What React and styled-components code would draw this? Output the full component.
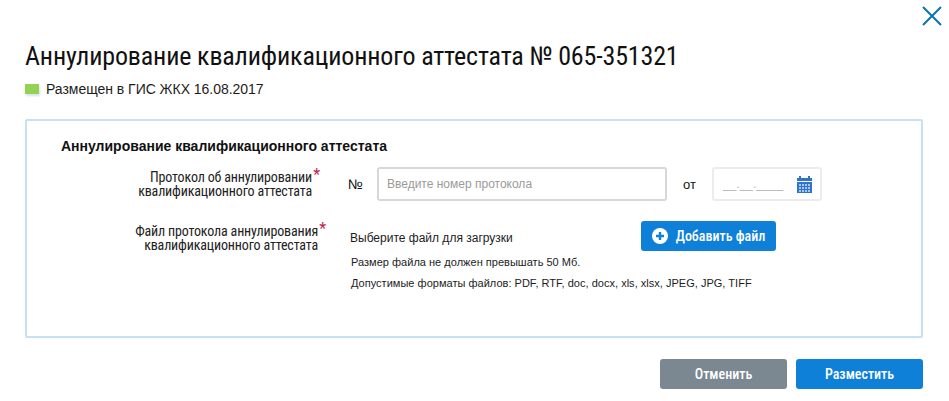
import React from "react";
import styled, { createGlobalStyle } from "styled-components";

const Global = createGlobalStyle`
  html, body { margin: 0; padding: 0; background: #fff; }
  body { font-family: "Liberation Sans", Arial, sans-serif; color: #111; }
`;

const Page = styled.div`
  width: 949px;
  height: 401px;
  box-sizing: border-box;
  padding: 6px 26px 0 25px;
  overflow: hidden;
`;
const CloseRow = styled.div`
  display: flex;
  justify-content: flex-end;
  margin-right: -19px;
  height: 20px;
`;
const Title = styled.h1`
  margin: 16px 0 0;
  font: 400 26px/28px Roboto, sans-serif;
  font-stretch: 75%;
  letter-spacing: -0.16px;
  color: #111;
  white-space: nowrap;
`;
const Status = styled.div`
  display: flex;
  align-items: center;
  gap: 7px;
  margin-top: 11px;
  height: 16px;
  font-size: 14px;
  letter-spacing: -0.03px;
  color: #1c1c1c;
`;
const StatusMark = styled.span`
  width: 14px;
  height: 10px;
  background: #94d352;
  box-shadow: 1px 2px 2px #d5e2ee;
`;
const Panel = styled.section`
  box-sizing: border-box;
  margin-top: 22px;
  width: 898px;
  height: 219px;
  border: 2px solid #c6e0f5;
  border-radius: 2px;
  padding: 17px 0 0 34px;
`;
const PanelTitle = styled.h2`
  margin: 0;
  font: 700 14px/16px "Liberation Sans", sans-serif;
  color: #111;
`;
const Row = styled.div`
  display: flex;
  align-items: flex-start;
`;
const ProtocolRow = styled(Row)`
  margin-top: 13px;
`;
const FileRow = styled(Row)`
  margin-top: 20px;
`;
const Label = styled.div`
  position: relative;
  width: ${p => p.$w}px;
  text-align: right;
  font: 400 14px/14px Roboto, sans-serif;
  font-stretch: 75%;
  letter-spacing: -0.16px;
  color: #222;
  padding-top: 3px;
  flex: none;
`;
const Star = styled.span`
  position: absolute;
  right: -8px;
  top: 0;
  color: #c0254f;
  font: 400 16px/16px Roboto, sans-serif;
`;
const Num = styled.span`
  width: 29px;
  margin-left: 36px;
  padding-top: 10px;
  font-size: 14px;
  line-height: 14px;
  letter-spacing: -0.4px;
  color: #111;
  flex: none;
`;
const Field = styled.div`
  box-sizing: border-box;
  height: 34px;
  border: 2px solid ${p => (p.$light ? "#ececec" : "#d8d8d8")};
  border-radius: 3px;
  background: #fff;
  display: flex;
  align-items: center;
  flex: none;
`;
const NumberField = styled(Field)`
  width: 290px;
  padding-left: 8px;
  font-size: 12px;
  color: #9a9a9a;
`;
const From = styled.span`
  width: 29px;
  margin-left: 16px;
  padding-top: 11px;
  font-size: 13px;
  line-height: 14px;
  flex: none;
`;
const DateField = styled(Field)`
  width: 110px;
  padding: 0 8px 0 9px;
  justify-content: space-between;
  font-size: 12px;
  color: #b5b5b5;
`;
const FileCol = styled.div`
  margin-left: 33px;
  width: 425px;
  flex: none;
`;
const FileTop = styled.div`
  display: flex;
  align-items: flex-start;
  justify-content: space-between;
`;
const Choose = styled.div`
  padding-top: 10px;
  font-size: 12px;
  line-height: 14px;
  color: #1c1c1c;
  margin-left: -1px;
`;
const AddButton = styled.button`
  width: 135px;
  height: 30px;
  padding: 0;
  border: 0;
  border-radius: 3px;
  background: #0f80d8;
  color: #fff;
  display: flex;
  align-items: center;
  justify-content: center;
  gap: 8px;
  font: 500 14px/16px Roboto, sans-serif;
  font-stretch: 75%;
`;
const Hint = styled.div`
  margin-top: ${p => p.$top}px;
  font-size: 11px;
  line-height: 13px;
  letter-spacing: 0.02px;
  color: #1c1c1c;
  white-space: nowrap;
`;
const Footer = styled.div`
  display: flex;
  justify-content: flex-end;
  gap: 9px;
  margin-top: 21px;
  width: 898px;
`;
const FooterButton = styled.button`
  width: 127px;
  height: 30px;
  padding: 0;
  border: 0;
  border-radius: 3px;
  background: ${p => (p.$primary ? "#0f80d8" : "#7b8791")};
  color: #fff;
  font: 500 14px/16px Roboto, sans-serif;
  font-stretch: 75%;
`;

const CloseIcon = () => (
  <svg width="20" height="20" viewBox="0 0 20 20" fill="none">
    <path d="M1 1L19 19M19 1L1 19" stroke="#0b73ae" strokeWidth="2" />
  </svg>
);
const PlusIcon = () => (
  <svg width="16" height="16" viewBox="0 0 16 16">
    <circle cx="8" cy="8" r="8" fill="#fff" />
    <path d="M8 4v8M4 8h8" stroke="#0f80d8" strokeWidth="2.4" />
  </svg>
);
const CalendarIcon = () => (
  <svg width="15" height="17" viewBox="0 0 15 17">
    <path d="M2 0h2v2h7V0h2v2h2v3H0V2h2z" fill="#2f74c8" />
    <path d="M0 6h15v11H0z" fill="#2f74c8" />
    <path d="M2 8h2v2H2zM5 8h2v2H5zM8 8h2v2H8zM11 8h2v2h-2zM2 11h2v2H2zM5 11h2v2H5zM8 11h2v2H8zM11 11h2v2h-2zM2 14h2v2H2zM5 14h2v2H5zM8 14h2v2H8zM11 14h2v2h-2z" fill="#a9c7ea" />
  </svg>
);

export default function App() {
  return (
    <Page>
      <Global />
      <CloseRow><CloseIcon /></CloseRow>
      <Title>Аннулирование квалификационного аттестата № 065-351321</Title>
      <Status><StatusMark />Размещен в ГИС ЖКХ 16.08.2017</Status>
      <Panel>
        <PanelTitle>Аннулирование квалификационного аттестата</PanelTitle>
        <ProtocolRow>
          <Label $w={251}>
            Протокол об аннулировании<br />квалификационного аттестата
            <Star>*</Star>
          </Label>
          <Num>№</Num>
          <NumberField>Введите номер протокола</NumberField>
          <From>от</From>
          <DateField $light>__.__.____<CalendarIcon /></DateField>
        </ProtocolRow>
        <FileRow>
          <Label $w={257}>
            Файл протокола аннулирования<br />квалификационного аттестата
            <Star>*</Star>
          </Label>
          <FileCol>
            <FileTop>
              <Choose>Выберите файл для загрузки</Choose>
              <AddButton><PlusIcon />Добавить файл</AddButton>
            </FileTop>
            <Hint $top={5}>Размер файла не должен превышать 50 Мб.</Hint>
            <Hint $top={8}>Допустимые форматы файлов: PDF, RTF, doc, docx, xls, xlsx, JPEG, JPG, TIFF</Hint>
          </FileCol>
        </FileRow>
      </Panel>
      <Footer>
        <FooterButton>Отменить</FooterButton>
        <FooterButton $primary>Разместить</FooterButton>
      </Footer>
    </Page>
  );
}
